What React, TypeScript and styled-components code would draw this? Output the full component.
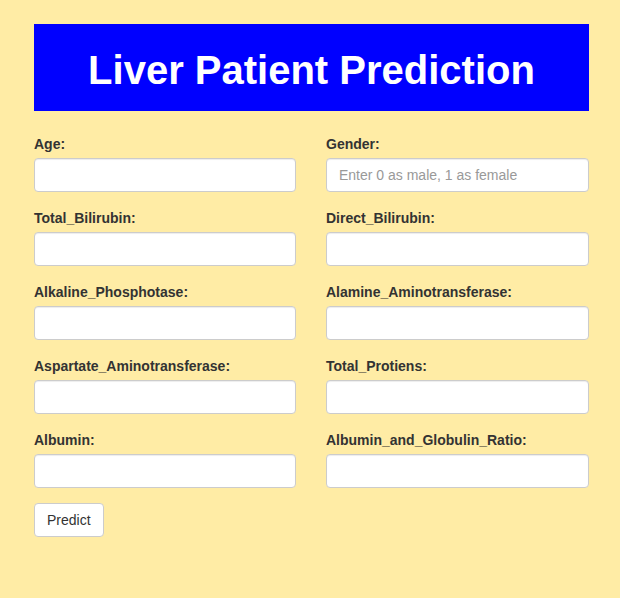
import React from "react";
import { styled, createGlobalStyle } from "styled-components";

const GlobalStyle = createGlobalStyle`
  * { box-sizing: border-box; }
  body {
    margin: 0;
    background: #ffeca5;
    font-family: "Liberation Sans", Arial, sans-serif;
    font-size: 14px;
    line-height: 1.42857;
    color: #333;
  }
`;

const Page = styled.div`
  width: 555px;
  margin: 0 34px;
  padding: 24px 0 40px;
`;

const Banner = styled.div`
  background: #0000ff;
  height: 87px;
  padding-top: 4px;
  display: flex;
  align-items: center;
  justify-content: center;
  margin-bottom: 22px;
`;

const Title = styled.h1`
  margin: 0;
  color: #ffffff;
  font-size: 40px;
  font-weight: 700;
  line-height: 1;
`;

const Grid = styled.div`
  display: grid;
  grid-template-columns: 262px 263px;
  column-gap: 30px;
`;

const Group = styled.div`
  margin-bottom: 15px;
`;

const Label = styled.label`
  display: block;
  font-weight: 700;
  line-height: 20px;
  padding-top: 1px;
  margin-bottom: 4px;
`;

const Input = styled.input`
  display: block;
  width: 100%;
  height: 34px;
  padding: 6px 12px;
  font-family: inherit;
  font-size: 14px;
  color: #555;
  background: #fff;
  border: 1px solid #ccc;
  border-radius: 4px;
  box-shadow: inset 0 1px 1px rgba(0, 0, 0, 0.075);
  outline: none;

  &::placeholder {
    color: #999;
  }
`;

const Button = styled.button`
  height: 34px;
  padding: 6px 12px;
  font-family: inherit;
  font-size: 14px;
  color: #333;
  background: #fff;
  border: 1px solid #ccc;
  border-radius: 4px;
  cursor: pointer;
`;

const fields: { name: string; placeholder?: string }[] = [
  { name: "Age" },
  { name: "Gender", placeholder: "Enter 0 as male, 1 as female" },
  { name: "Total_Bilirubin" },
  { name: "Direct_Bilirubin" },
  { name: "Alkaline_Phosphotase" },
  { name: "Alamine_Aminotransferase" },
  { name: "Aspartate_Aminotransferase" },
  { name: "Total_Protiens" },
  { name: "Albumin" },
  { name: "Albumin_and_Globulin_Ratio" },
];

const App: React.FC = () => {
  return (
    <>
      <GlobalStyle />
      <Page>
        <Banner>
          <Title>Liver Patient Prediction</Title>
        </Banner>
        <form onSubmit={(e) => e.preventDefault()}>
          <Grid>
            {fields.map((f) => (
              <Group key={f.name}>
                <Label htmlFor={f.name}>{f.name}:</Label>
                <Input id={f.name} name={f.name} placeholder={f.placeholder} />
              </Group>
            ))}
          </Grid>
          <Button type="submit">Predict</Button>
        </form>
      </Page>
    </>
  );
};

export default App;
